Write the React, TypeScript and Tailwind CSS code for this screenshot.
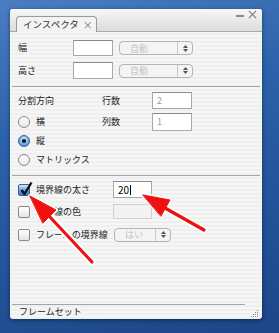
import React from "react";

const font = { fontFamily: '"Noto Sans CJK JP", "Noto Sans", sans-serif' };

const TextBox = ({ value, disabled, w }: { value?: string; disabled?: boolean; w: string }) => (
  <div
    className={`${w} h-full bg-white border border-[#a8a8a8] border-t-[#8a8a8a] flex items-center pl-[4px] text-[9px] ${
      disabled ? "text-[#a0a0a0]" : "text-black"
    }`}
  >
    {value}
  </div>
);

const Popup = ({ label, w }: { label: string; w: string }) => (
  <div className={`${w} h-[14px] rounded-[4px] border border-[#b4b4b4] bg-[#f4f4f4] flex items-center`}>
    <span className="flex-1 pl-[10px] text-[9px] text-[#c4c4c4] leading-none">{label}</span>
    <div className="w-[15px] h-full border-l border-[#c8c8c8] flex flex-col items-center justify-center gap-[1px]">
      <svg width="5" height="3" viewBox="0 0 5 3"><path d="M2.5 0L5 3H0z" fill="#555" /></svg>
      <svg width="5" height="3" viewBox="0 0 5 3"><path d="M0 0h5L2.5 3z" fill="#555" /></svg>
    </div>
  </div>
);

const Radio = ({ on }: { on?: boolean }) =>
  on ? (
    <div className="w-[12px] h-[12px] rounded-full border border-[#3a5f9a] bg-[radial-gradient(circle_at_50%_35%,#d4ecff,#6aa8e8_60%,#2f74c8)] flex items-center justify-center">
      <div className="w-[4px] h-[4px] rounded-full bg-[#111]" />
    </div>
  ) : (
    <div className="w-[12px] h-[12px] rounded-full border border-[#8a8a8a] bg-[linear-gradient(180deg,#ffffff,#e6e6e6)]" />
  );

const Check = ({ on }: { on?: boolean }) =>
  on ? (
    <div className="relative w-[12px] h-[12px] rounded-[2px] border border-[#3a5f9a] bg-[linear-gradient(180deg,#cfe6ff,#5b9ae0_60%,#3a7cd0)]">
      <svg className="absolute -top-[4px] left-[1px]" width="13" height="15" viewBox="0 0 13 15">
        <path d="M1.5 9L4.5 13L11.5 1.5" stroke="#111" strokeWidth="2.4" fill="none" strokeLinejoin="round" />
      </svg>
    </div>
  ) : (
    <div className="w-[12px] h-[12px] rounded-[2px] border border-[#8a8a8a] bg-[linear-gradient(180deg,#ffffff,#e4e4e4)]" />
  );

const Sep = () => <div className="-mx-[6px] h-px bg-[#a4a4a4]" />;

export default function App() {
  return (
    <div
      className="relative w-[279px] h-[333px] overflow-hidden bg-[linear-gradient(165deg,#4a7dc0_0%,#2c62aa_35%,#24549a_65%,#1c4688_100%)] pt-[9px] pl-[10px]"
      style={font}
    >
      <div className="w-[252px] h-[310px] flex flex-col rounded-[3px] shadow-[0_1px_4px_rgba(0,0,0,0.45)] overflow-hidden bg-[repeating-linear-gradient(180deg,#efefef_0px,#efefef_2px,#f6f6f6_2px,#f6f6f6_4px)] text-[#222]">
        {/* title bar */}
        <div className="relative h-[23px] bg-[linear-gradient(180deg,#f7f7f7,#dcdcdc)] border-b border-[#a9a9a9] flex items-end pl-[6px]">
          <div className="w-[81px] h-[16px] -mb-px rounded-t-[4px] border border-b-0 border-[#9a9a9a] bg-[#f3f3f3] flex items-center pl-[6px] gap-[4px] text-[9.5px] text-[#333] whitespace-nowrap">
            <span>インスペクタ</span>
            <span className="text-[#777] text-[10px] leading-none">×</span>
          </div>
          <div className="absolute right-[5px] top-[1px] flex items-center gap-[4px] text-[#888]">
            <div className="w-[8px] h-[2px] bg-[#888] mt-[2px]" />
            <svg width="9" height="9" viewBox="0 0 9 9">
              <path d="M1 1L8 8M8 1L1 8" stroke="#888" strokeWidth="1.2" />
            </svg>
          </div>
        </div>

        {/* content */}
        <div className="flex-1 flex flex-col px-[8px] text-[9px]">
          <div className="mt-[8px] h-[16px] flex items-center">
            <span className="w-[55px]">幅</span>
            <TextBox w="w-[40px]" />
            <div className="ml-[6px]"><Popup label="自動" w="w-[74px]" /></div>
          </div>
          <div className="mt-[6px] h-[17px] flex items-center">
            <span className="w-[55px]">高さ</span>
            <TextBox w="w-[40px]" />
            <div className="ml-[6px]"><Popup label="自動" w="w-[74px]" /></div>
          </div>
          <div className="mt-[7px]"><Sep /></div>

          <div className="mt-[5px] h-[17px] flex items-center">
            <span className="w-[84px]">分割方向</span>
            <span className="w-[50px]">行数</span>
            <TextBox w="w-[40px]" value="2" disabled />
          </div>
          <div className="mt-[4px] h-[18px] flex items-center">
            <div className="w-[84px] flex items-center gap-[6px]"><Radio /><span>横</span></div>
            <span className="w-[50px]">列数</span>
            <TextBox w="w-[40px]" value="1" disabled />
          </div>
          <div className="mt-[1px] h-[18px] flex items-center gap-[6px]"><Radio on /><span>縦</span></div>
          <div className="mt-[1px] h-[18px] flex items-center gap-[6px]"><Radio /><span>マトリックス</span></div>
          <div className="mt-[6px]"><Sep /></div>

          <div className="mt-[5px] h-[17px] flex items-center">
            <div className="w-[95px] flex items-center gap-[6px]"><Check on /><span>境界線の太さ</span></div>
            <div className="w-[39px] h-full bg-white border border-[#a8a8a8] border-t-[#8a8a8a] flex items-center pl-[4px] text-[10px] text-black">
              20<span className="w-px h-[10px] bg-black ml-px" />
            </div>
          </div>
          <div className="mt-[6px] h-[15px] flex items-center">
            <div className="w-[95px] flex items-center gap-[6px]"><Check /><span>境界線の色</span></div>
            <div className="w-[39px] h-full bg-[#f2f2f2] border border-[#cfcfcf]" />
          </div>
          <div className="mt-[7px] h-[17px] flex items-center">
            <div className="w-[96px] flex items-center gap-[6px]"><Check /><span>フレームの境界線</span></div>
            <Popup label="はい" w="w-[57px]" />
          </div>

          <div className="flex-1" />
          <div className="-ml-[6px] mr-[9px] h-px bg-[#a4a4a4]" />
          <div className="h-[14px] flex items-center justify-between pl-[1px]">
            <span>フレームセット</span>
            <svg width="9" height="9" viewBox="0 0 9 9" className="-mr-[5px] mt-[2px]">
              {[
                [8, 2], [8, 4], [6, 4], [8, 6], [6, 6], [4, 6], [8, 8], [6, 8], [4, 8], [2, 8],
              ].map(([x, y], i) => (
                <rect key={i} x={x - 1} y={y - 1} width="1" height="1" fill="#888" />
              ))}
            </svg>
          </div>
        </div>
      </div>

      {/* annotation arrows */}
      <svg className="absolute left-0 top-0 pointer-events-none" width="279" height="333" viewBox="0 0 279 333">
        <g stroke="#fff" strokeLinejoin="round" strokeLinecap="round">
          <line x1="92" y1="262" x2="49" y2="216" strokeWidth="7" />
          <polygon points="30,196 56,210 43,223" fill="#fff" strokeWidth="4" />
          <line x1="204" y1="230" x2="165" y2="208" strokeWidth="7" />
          <polygon points="143,195 170,200 161,216" fill="#fff" strokeWidth="4" />
        </g>
        <g fill="#f01010" stroke="#f01010" strokeLinejoin="round" strokeLinecap="round">
          <line x1="92" y1="262" x2="49" y2="216" strokeWidth="3.2" />
          <polygon points="30,196 56,210 43,223" strokeWidth="1" />
          <line x1="204" y1="230" x2="165" y2="208" strokeWidth="3.2" />
          <polygon points="143,195 170,200 161,216" strokeWidth="1" />
        </g>
      </svg>
    </div>
  );
}
